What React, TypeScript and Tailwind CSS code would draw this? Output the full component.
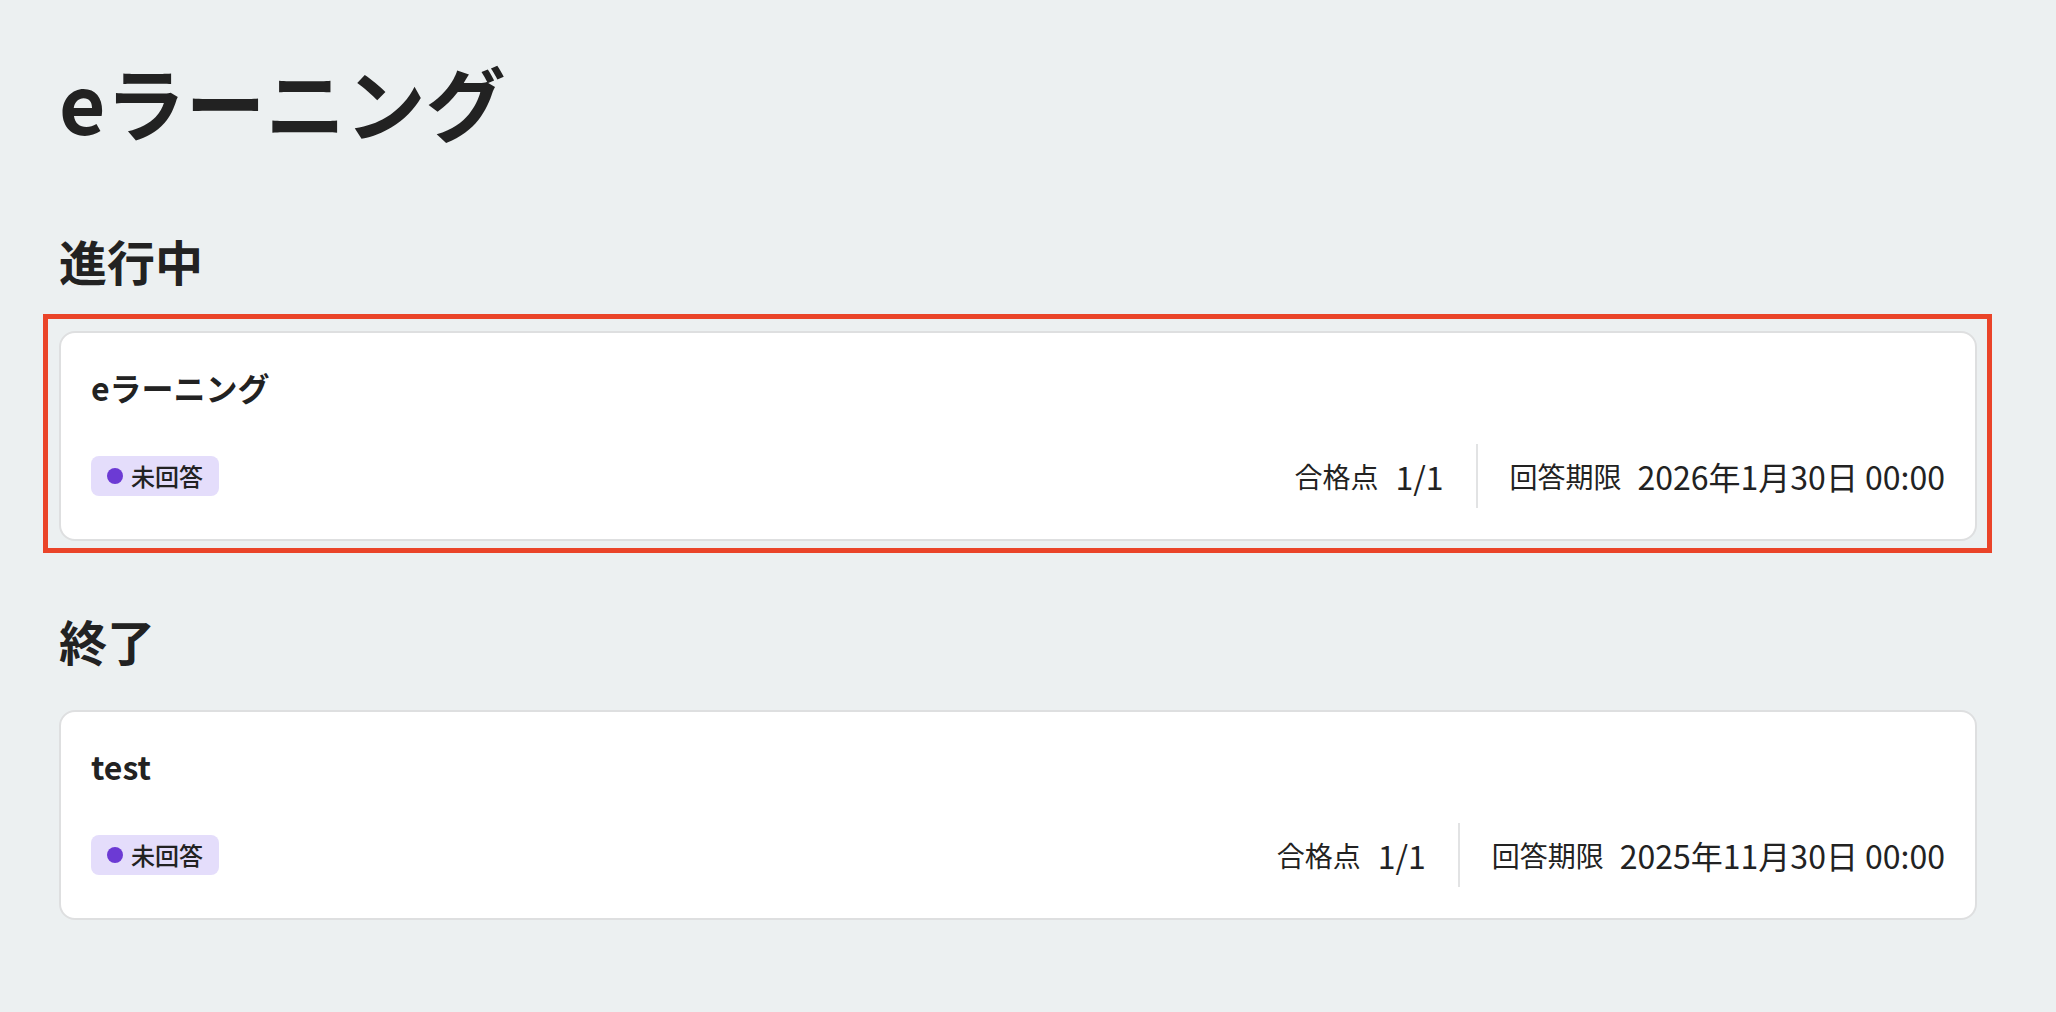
import React from "react";

type Item = {
  title: string;
  score: string;
  deadline: string;
  highlighted?: boolean;
};

const font = {
  fontFamily: '"Noto Sans CJK JP", "Noto Sans", sans-serif',
};

function Badge() {
  return (
    <div className="flex h-[40px] items-center gap-[8px] rounded-[8px] bg-[#e4ddfb] px-[16px]">
      <span className="h-[16px] w-[16px] rounded-full bg-[#6c3ad4]" />
      <span className="text-[24px] font-medium leading-none text-[#222222]">未回答</span>
    </div>
  );
}

function Card({ item }: { item: Item }) {
  return (
    <div className="relative">
      <div className="rounded-[16px] border-2 border-[#dedfe0] bg-white px-[30px] pb-[31px] pt-[30px]">
        <div className="text-[32px] font-bold leading-[1.5] text-[#222222]">{item.title}</div>
        <div className="mt-[33px] flex h-[64px] items-center justify-between">
          <Badge />
          <div className="flex h-full items-center text-[#222222]">
            <div className="flex items-center gap-[17px]">
              <span className="text-[28px] leading-none">合格点</span>
              <span className="text-[32px] leading-none">{item.score}</span>
            </div>
            <div className="mx-[32px] h-[64px] w-[2px] bg-[#e2e3e4]" />
            <div className="flex items-center gap-[16px]">
              <span className="text-[28px] leading-none">回答期限</span>
              <span className="text-[32px] leading-none">{item.deadline}</span>
            </div>
          </div>
        </div>
      </div>
      {item.highlighted && (
        <div className="pointer-events-none absolute -bottom-[12px] -left-[16px] -right-[15px] -top-[17px] border-[5px] border-[#ea4429]" />
      )}
    </div>
  );
}

export default function App() {
  const active: Item = {
    title: "eラーニング",
    score: "1/1",
    deadline: "2026年1月30日 00:00",
    highlighted: true,
  };
  const done: Item = {
    title: "test",
    score: "1/1",
    deadline: "2025年11月30日 00:00",
  };
  return (
    <div className="min-h-screen bg-[#ecf0f1] pl-[59px] pr-[79px] pt-[40px]" style={font}>
      <h1 className="text-[80px] font-bold leading-[1.5] text-[#222222]">eラーニング</h1>
      <section className="mt-[64px]">
        <h2 className="text-[48px] font-bold leading-[1.5] text-[#222222]">進行中</h2>
        <div className="mt-[35px]">
          <Card item={active} />
        </div>
      </section>
      <section className="mt-[63px]">
        <h2 className="text-[48px] font-bold leading-[1.5] text-[#222222]">終了</h2>
        <div className="mt-[34px]">
          <Card item={done} />
        </div>
      </section>
    </div>
  );
}
